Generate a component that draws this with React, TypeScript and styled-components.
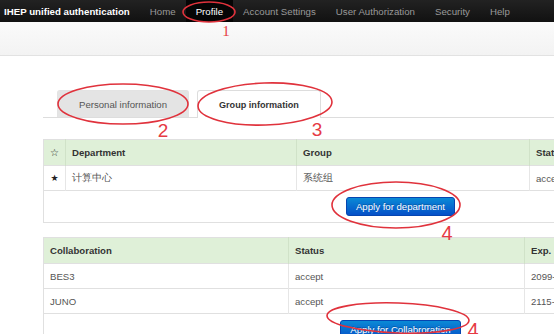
import React from "react";
import styled, { createGlobalStyle } from "styled-components";

const GlobalStyle = createGlobalStyle`
  html, body {
    margin: 0;
    padding: 0;
    background: #ffffff;
    overflow: hidden;
  }
  body {
    font-family: "Liberation Sans", Arial, sans-serif;
    color: #333;
  }
`;

const Page = styled.div`
  position: relative;
  width: 554px;
  height: 334px;
  overflow: hidden;
`;

const Navbar = styled.div`
  display: flex;
  align-items: stretch;
  height: 22px;
  width: 800px;
  background: linear-gradient(#222222, #111111);
`;

const Brand = styled.div`
  display: flex;
  align-items: center;
  padding: 0 10px 0 4px;
  color: #ffffff;
  font-weight: bold;
  font-size: 9.7px;
  white-space: nowrap;
`;

const NavItem = styled.div<{ $active?: boolean }>`
  display: flex;
  align-items: center;
  padding: 0 10px;
  font-size: 9.7px;
  white-space: nowrap;
  color: ${(p) => (p.$active ? "#ffffff" : "#999999")};
  background: ${(p) => (p.$active ? "#050505" : "transparent")};
`;

const SubBar = styled.div`
  height: 33px;
  background: linear-gradient(#fafafa, #f3f3f3);
  border-bottom: 1px solid #e2e2e2;
`;

const Content = styled.div`
  width: 715px;
  margin-left: 43px;
  padding-top: 34px;
`;

const Tabs = styled.div`
  display: flex;
  gap: 8px;
  padding-left: 14px;
  border-bottom: 1px solid #dddddd;
`;

const Tab = styled.div<{ $active?: boolean }>`
  display: flex;
  align-items: center;
  padding: 0 21px;
  font-size: ${(p) => (p.$active ? "9.1px" : "9.6px")};
  border: 1px solid ${(p) => (p.$active ? "#dddddd" : "#e3e3e3")};
  border-bottom: none;
  border-radius: 3px 3px 0 0;
  margin-bottom: ${(p) => (p.$active ? "-1px" : "0")};
  height: ${(p) => (p.$active ? "27px" : "26px")};
  background: ${(p) => (p.$active ? "#ffffff" : "#e4e4e4")};
  color: ${(p) => (p.$active ? "#333333" : "#555555")};
  font-weight: ${(p) => (p.$active ? "bold" : "normal")};
  white-space: nowrap;
`;

const Table = styled.table<{ $top: number }>`
  width: 715px;
  margin-top: ${(p) => p.$top}px;
  border-collapse: collapse;
  table-layout: fixed;
  border: 1px solid #e0e0e0;
  font-size: 9.6px;
`;

const HeadCell = styled.th`
  height: 25px;
  padding: 0 6px;
  text-align: left;
  font-weight: bold;
  color: #333333;
  background: #dff0d8;
  border-left: 1px solid #d0e2c8;
  white-space: nowrap;
  overflow: hidden;
  &:first-child {
    border-left: none;
  }
`;

const Cell = styled.td`
  height: 24px;
  padding: 0 6px;
  color: #555555;
  border-top: 1px solid #e0e0e0;
  border-left: 1px solid #e6e6e6;
  white-space: nowrap;
  overflow: hidden;
  &:first-child {
    border-left: none;
  }
`;

const StarCell = styled(Cell)`
  padding: 0;
  text-align: center;
  color: #222222;
  font-family: "DejaVu Sans", sans-serif;
  font-size: 9px;
`;

const StarHead = styled(HeadCell)`
  padding: 0;
  text-align: center;
  color: #222222;
  font-family: "DejaVu Sans", sans-serif;
  font-size: 10px;
  font-weight: bold;
`;

const ActionCell = styled.td`
  height: 31px;
  padding: 0;
  text-align: center;
  border-top: 1px solid #e0e0e0;
`;

const PrimaryButton = styled.button`
  height: 19px;
  padding: 0 9px;
  font-family: "Liberation Sans", Arial, sans-serif;
  font-size: 9.6px;
  color: #ffffff;
  text-shadow: 0 -1px 0 rgba(0, 0, 0, 0.25);
  background: linear-gradient(#0a8ad6, #0550c8);
  border: 1px solid #0645b0;
  border-radius: 3px;
  vertical-align: middle;
`;

const DateLink = styled.span`
  color: #c07a3a;
`;

const Marks = styled.svg`
  position: absolute;
  left: 0;
  top: 0;
  pointer-events: none;
`;

const Num = styled.text<{ $serif?: boolean }>`
  fill: #e63a44;
  font-family: ${(p) =>
    p.$serif ? `"Liberation Serif", serif` : `"Liberation Sans", sans-serif`};
`;

const navItems = [
  "Home",
  "Profile",
  "Account Settings",
  "User Authorization",
  "Security",
  "Help",
];

const Annotations: React.FC = () => (
  <Marks width={554} height={334}>
    <g fill="none" stroke="#e0323c" strokeWidth={1.6}>
      <ellipse cx={209} cy={12} rx={26} ry={10} />
      <ellipse cx={123} cy={104} rx={65} ry={20} />
      <ellipse cx={265} cy={104} rx={67} ry={21} transform="rotate(-2 265 104)" />
      <ellipse cx={396} cy={205} rx={64} ry={23} />
      <ellipse cx={398} cy={318} rx={71} ry={15} transform="rotate(2 398 318)" />
    </g>
    <Num $serif x={226} y={36} fontSize={15} textAnchor="middle">
      1
    </Num>
    <Num x={163} y={137} fontSize={19} textAnchor="middle">
      2
    </Num>
    <Num x={317} y={136} fontSize={19} textAnchor="middle">
      3
    </Num>
    <Num x={447} y={240} fontSize={20} textAnchor="middle">
      4
    </Num>
    <Num x={473} y={337} fontSize={20} textAnchor="middle">
      4
    </Num>
  </Marks>
);

const App: React.FC = () => {
  return (
    <Page>
      <GlobalStyle />
      <Navbar>
        <Brand>IHEP unified authentication</Brand>
        {navItems.map((item) => (
          <NavItem key={item} $active={item === "Profile"}>
            {item}
          </NavItem>
        ))}
      </Navbar>
      <SubBar />

      <Content>
        <Tabs>
          <Tab>Personal information</Tab>
          <Tab $active>Group information</Tab>
        </Tabs>

        <Table $top={21}>
          <colgroup>
            <col style={{ width: 22 }} />
            <col style={{ width: 231 }} />
            <col style={{ width: 233 }} />
            <col />
          </colgroup>
          <thead>
            <tr>
              <StarHead>☆</StarHead>
              <HeadCell>Department</HeadCell>
              <HeadCell>Group</HeadCell>
              <HeadCell>Status</HeadCell>
            </tr>
          </thead>
          <tbody>
            <tr>
              <StarCell>★</StarCell>
              <Cell>计算中心</Cell>
              <Cell>系统组</Cell>
              <Cell>accept</Cell>
            </tr>
            <tr>
              <ActionCell colSpan={4}>
                <PrimaryButton>Apply for department</PrimaryButton>
              </ActionCell>
            </tr>
          </tbody>
        </Table>

        <Table $top={14}>
          <colgroup>
            <col style={{ width: 245 }} />
            <col style={{ width: 236 }} />
            <col />
          </colgroup>
          <thead>
            <tr>
              <HeadCell>Collaboration</HeadCell>
              <HeadCell>Status</HeadCell>
              <HeadCell>
                Exp. <DateLink>Date</DateLink>
              </HeadCell>
            </tr>
          </thead>
          <tbody>
            <tr>
              <Cell>BES3</Cell>
              <Cell>accept</Cell>
              <Cell>2099-12-31</Cell>
            </tr>
            <tr>
              <Cell>JUNO</Cell>
              <Cell>accept</Cell>
              <Cell>2115-12-31</Cell>
            </tr>
            <tr>
              <ActionCell colSpan={3}>
                <PrimaryButton>Apply for Collabroration</PrimaryButton>
              </ActionCell>
            </tr>
          </tbody>
        </Table>
      </Content>

      <Annotations />
    </Page>
  );
};

export default App;
